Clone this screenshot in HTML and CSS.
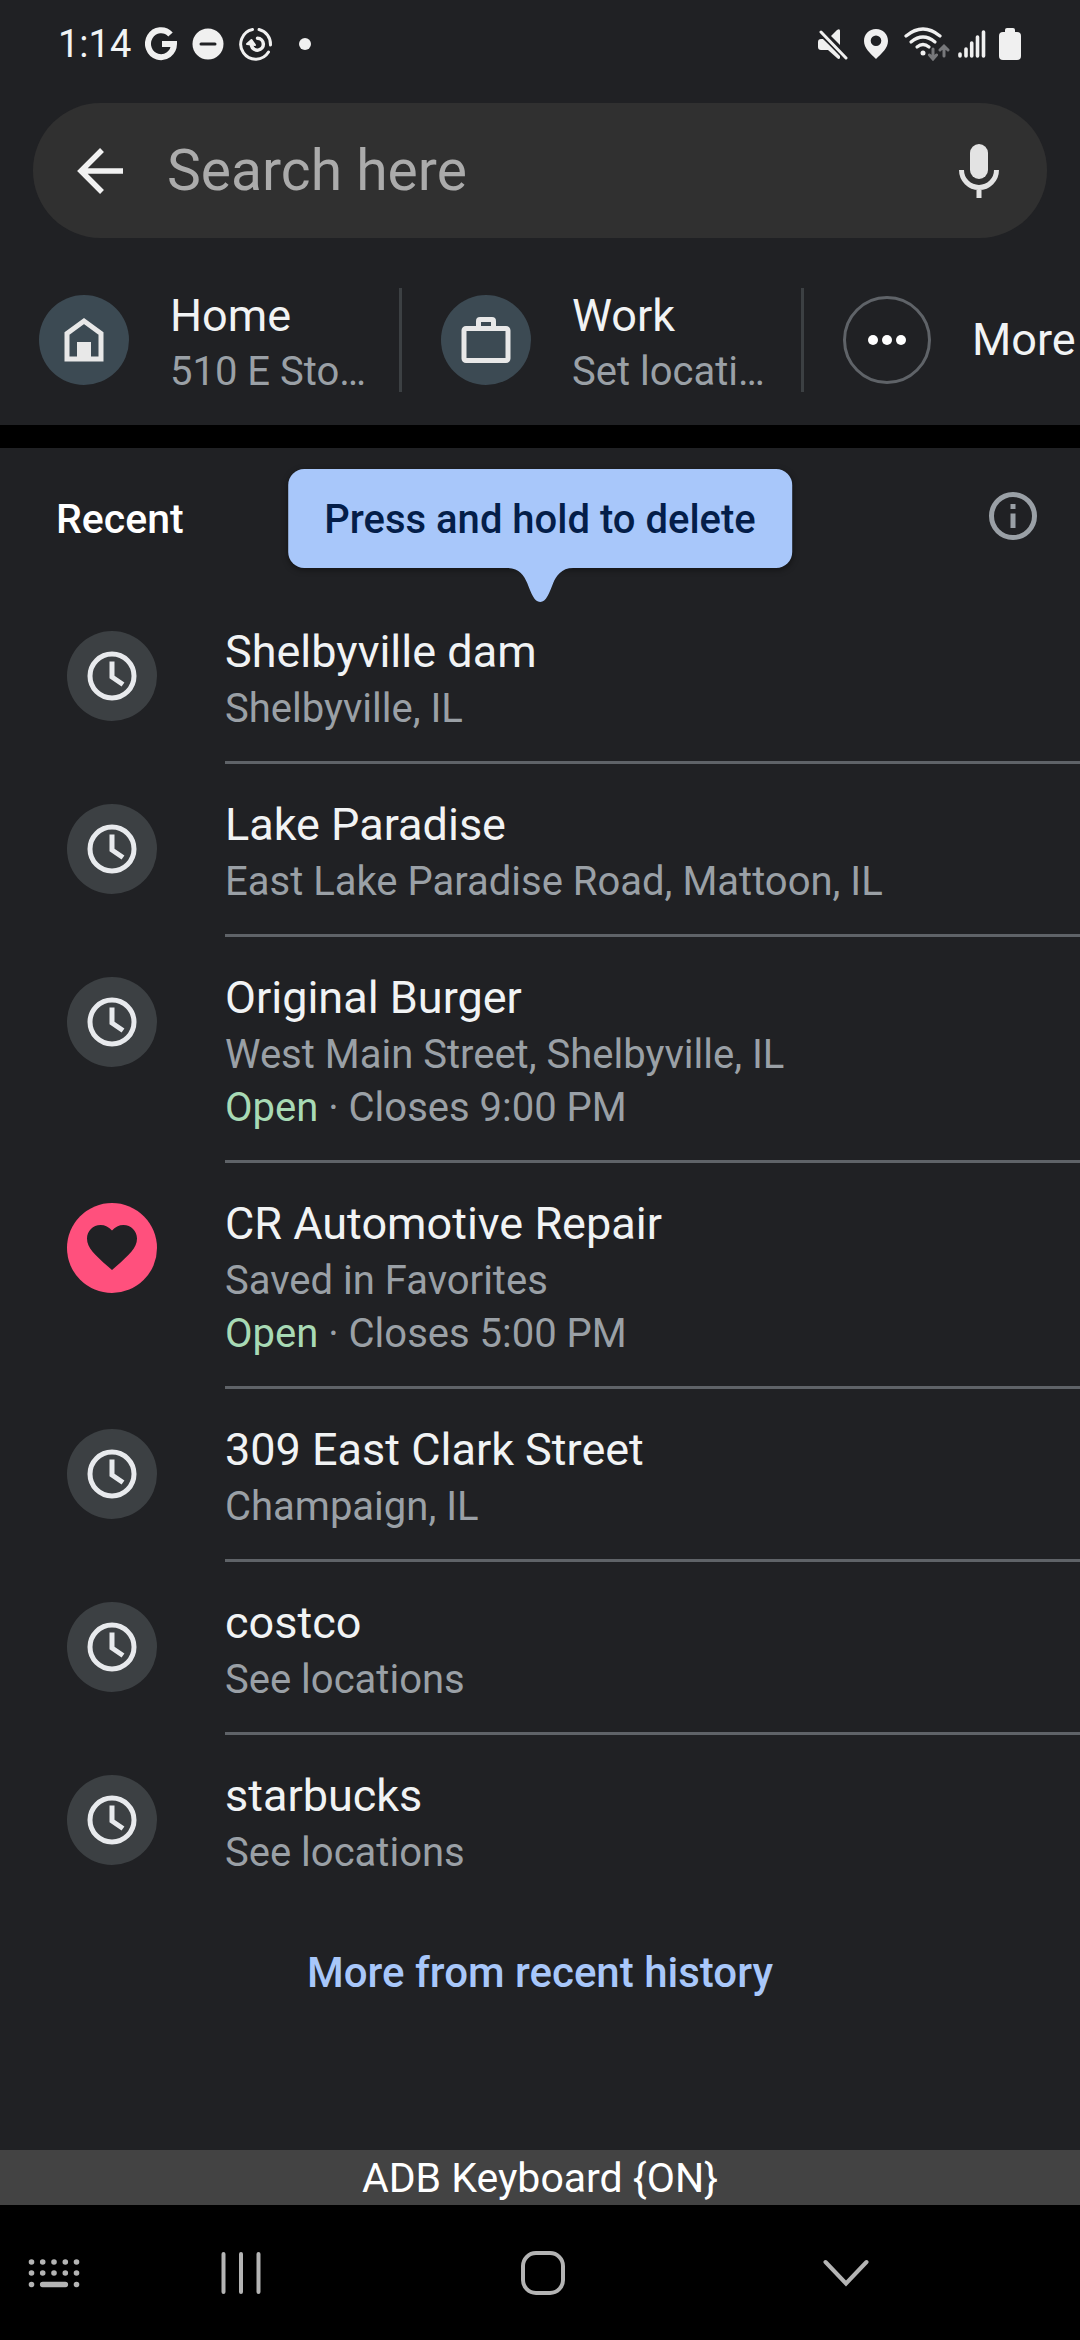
FILE: index.html
```html
<!DOCTYPE html>
<html lang="en">
<head>
<meta charset="utf-8">
<meta name="viewport" content="width=device-width, initial-scale=1">
<title>Search</title>
<link rel="stylesheet" href="styles.css">
</head>
<body>
<svg width="0" height="0" class="sprite" aria-hidden="true">
  <symbol id="clock" viewBox="0 0 50 50">
    <circle cx="25" cy="25" r="22" fill="none" stroke="#e8eaed" stroke-width="5"/>
    <path d="M25 10.500V26L36 33.500" fill="none" stroke="#e8eaed" stroke-width="5"/>
  </symbol>
</svg>
<div class="screen">
  <header class="status">
    <span class="time">1:14</span>
    <svg class="s-google" width="32" height="34" viewBox="0 0 32 34"><path d="M25.500 7.500A13 13.500 0 1 0 29 17H17" fill="none" stroke="#f0f0f0" stroke-width="6"/></svg>
    <svg class="s-dnd" width="32" height="32" viewBox="0 0 32 32"><circle cx="16" cy="16" r="15.500" fill="#f0f0f0"/><path d="M9 16H23" stroke="#202124" stroke-width="3" stroke-linecap="round"/></svg>
    <svg class="s-well" width="34" height="34" viewBox="0 0 34 34" fill="none" stroke="#f0f0f0" stroke-width="3" stroke-linecap="round"><path d="M13.500 2.500A15 15 0 1 0 29.500 25"/><path d="M20 2.500A15 15 0 0 1 31.500 18"/><path d="M18.500 11.200A6 6 0 1 1 12.500 18.500" stroke-width="3.500"/><path d="M8 17L12.500 13L16 18Z" fill="#f0f0f0" stroke-width="2" stroke-linejoin="round"/></svg>
    <span class="s-dot"></span>
    <span class="spacer"></span>
    <svg class="s-mute" width="30" height="32" viewBox="0 0 30 32" fill="#f0f0f0"><path d="M3 11H5L22 27V30Q21 32 19 30L10 22H3Q0 22 0 19V14Q0 11 3 11Z"/><path d="M13 8L19 2Q22 0 22 3V17Z"/><path d="M3 4L28 30" stroke="#202124" stroke-width="6"/><path d="M3 4L28 30" stroke="#f0f0f0" stroke-width="3" stroke-linecap="round"/></svg>
    <svg class="s-pin" width="24" height="30" viewBox="0 0 24 30"><path fill="#f0f0f0" fill-rule="evenodd" d="M12 0C5 0 0 5 0 12C0 19 6 24 12 30C18 24 24 19 24 12C24 5 19 0 12 0ZM12 6.500A5.300 5.300 0 1 1 12 17.100A5.300 5.300 0 0 1 12 6.500Z"/></svg>
    <svg class="s-wifi" width="46" height="34" viewBox="0 0 46 34" fill="none" stroke-linecap="round"><g stroke="#f0f0f0" stroke-width="3.200"><path d="M2 9Q19 -5 36 9"/><path d="M7 15Q19 5 31 15"/><path d="M13 20Q19 15 25 20"/></g><circle cx="19" cy="26" r="2.500" fill="#f0f0f0"/><path d="M29 22V31M25.500 28L29 32L32.500 28M40 29V20M36 23L40 19L44 23" stroke="#77787b" stroke-width="3"/></svg>
    <svg class="s-signal" width="28" height="32" viewBox="0 0 28 32" stroke="#f0f0f0" stroke-width="3.600" stroke-linecap="round"><path d="M2 26V28M8 21V28M13.700 15V28M19.500 9V28M25.500 4V28"/></svg>
    <svg class="s-battery" width="22" height="32" viewBox="0 0 22 32" fill="#f0f0f0"><rect x="6" y="0" width="10" height="8" rx="2"/><rect x="0" y="4" width="22" height="28" rx="4"/></svg>
  </header>

  <form class="search">
    <button type="button" class="plain" aria-label="Back"><svg width="46" height="46" viewBox="0 0 46 46" fill="none" stroke="#f1f1f1" stroke-width="5.500"><path d="M25 2L4 23L25 44M4 23H46"/></svg></button>
    <input type="text" placeholder="Search here" aria-label="Search here">
    <button type="button" class="plain" aria-label="Voice search"><svg width="40" height="56" viewBox="0 0 40 56"><rect x="11" y="1" width="18" height="35" rx="9" fill="#e3e3e3"/><path d="M2.500 27A17.500 17.500 0 0 0 37.500 27M20 44V55" fill="none" stroke="#e3e3e3" stroke-width="5"/></svg></button>
  </form>

  <nav class="shortcuts">
    <a href="#" class="shortcut">
      <span class="disc blue"><svg width="40" height="46" viewBox="0 0 40 46"><path d="M3 16.500L20 4L37 16.500V42H3Z" fill="none" stroke="#e8e8e8" stroke-width="5"/><rect x="13" y="25" width="14" height="18" fill="#e8e8e8"/></svg></span>
      <span class="label"><span class="title">Home</span><span class="sub">510 E Sto…</span></span>
    </a>
    <a href="#" class="shortcut">
      <span class="disc blue"><svg width="50" height="48" viewBox="0 0 50 48" fill="none" stroke="#e8e8e8" stroke-width="5"><rect x="3" y="12.500" width="44" height="32" rx="2"/><path d="M17.500 12V5Q17.500 3.500 19 3.500H31Q32.500 3.500 32.500 5V12"/></svg></span>
      <span class="label"><span class="title">Work</span><span class="sub">Set locati…</span></span>
    </a>
    <a href="#" class="shortcut more">
      <span class="disc ring"><svg width="40" height="12" viewBox="0 0 40 12" fill="#fff"><circle cx="6" cy="6" r="5"/><circle cx="20" cy="6" r="5"/><circle cx="34" cy="6" r="5"/></svg></span>
      <span class="title">More</span>
    </a>
  </nav>

  <main class="recent">
    <div class="heading">
      <h2>Recent</h2>
      <button type="button" class="plain" aria-label="About recent history"><svg width="50" height="50" viewBox="0 0 50 50"><circle cx="25" cy="25" r="21.500" fill="none" stroke="#9aa0a6" stroke-width="5"/><path d="M25 13V18M25 22.500V37" stroke="#9aa0a6" stroke-width="5"/></svg></button>
      <div class="tooltip" role="tooltip">Press and hold to delete<svg width="66" height="36" viewBox="0 0 66 36"><path fill="#a8c7fa" d="M0 0V1C12 1 17 9 20 16C24 26 27 35 33 35C39 35 42 26 46 16C49 9 54 1 66 1V0Z"/></svg></div>
    </div>
    <ul>
      <li><span class="disc"><svg width="50" height="50"><use href="#clock"/></svg></span><a href="#" class="place"><span class="title">Shelbyville dam</span><span class="sub">Shelbyville, IL</span></a></li>
      <li><span class="disc"><svg width="50" height="50"><use href="#clock"/></svg></span><a href="#" class="place"><span class="title">Lake Paradise</span><span class="sub">East Lake Paradise Road, Mattoon, IL</span></a></li>
      <li><span class="disc"><svg width="50" height="50"><use href="#clock"/></svg></span><a href="#" class="place"><span class="title">Original Burger</span><span class="sub">West Main Street, Shelbyville, IL</span><span class="sub"><span class="open">Open</span> · Closes 9:00 PM</span></a></li>
      <li><span class="disc pink"><svg width="50" height="46" viewBox="0 0 50 46"><path fill="#202124" d="M25 45L21 41.500C8 30 0 23 0 13.500C0 6 6 0 13.500 0C18 0 22 2 25 5.500C28 2 32 0 36.500 0C44 0 50 6 50 13.500C50 23 42 30 29 41.500Z"/></svg></span><a href="#" class="place"><span class="title">CR Automotive Repair</span><span class="sub">Saved in Favorites</span><span class="sub"><span class="open">Open</span> · Closes 5:00 PM</span></a></li>
      <li><span class="disc"><svg width="50" height="50"><use href="#clock"/></svg></span><a href="#" class="place"><span class="title">309 East Clark Street</span><span class="sub">Champaign, IL</span></a></li>
      <li><span class="disc"><svg width="50" height="50"><use href="#clock"/></svg></span><a href="#" class="place"><span class="title">costco</span><span class="sub">See locations</span></a></li>
      <li><span class="disc"><svg width="50" height="50"><use href="#clock"/></svg></span><a href="#" class="place"><span class="title">starbucks</span><span class="sub">See locations</span></a></li>
    </ul>
    <a href="#" class="history">More from recent history</a>
  </main>

  <footer>
    <div class="keyboard">ADB Keyboard {ON}</div>
    <div class="navbar">
      <button type="button" class="plain" aria-label="Keyboard"><svg width="52" height="30" viewBox="0 0 52 30" fill="none" stroke="#b4b4b4" stroke-width="5.600" stroke-linecap="round"><path d="M3.500 4h.01M14.700 4h.01M26 4h.01M37.300 4h.01M48.500 4h.01M3.500 15h.01M14.700 15h.01M26 15h.01M37.300 15h.01M48.500 15h.01M3.500 26.500h.01M14.700 26.500H37.300M48.500 26.500h.01"/></svg></button>
      <button type="button" class="plain" aria-label="Recent apps"><svg width="40" height="44" viewBox="0 0 40 44" stroke="#b4b4b4" stroke-width="4" stroke-linecap="round"><path d="M2.500 3V41M20 3V41M37.500 3V41"/></svg></button>
      <button type="button" class="plain" aria-label="Home"><svg width="46" height="46" viewBox="0 0 46 46"><rect x="3" y="3" width="40" height="40" rx="13" fill="none" stroke="#b4b4b4" stroke-width="4"/></svg></button>
      <button type="button" class="plain" aria-label="Hide keyboard"><svg width="46" height="28" viewBox="0 0 46 28" fill="none" stroke="#b4b4b4" stroke-width="4" stroke-linecap="round"><path d="M2.500 3L23 24.500L43.500 3"/></svg></button>
    </div>
  </footer>
</div>
</body>
</html>
```
FILE: styles.css
```css
* { box-sizing: border-box; }

body {
  margin: 0;
  background: #202124;
  color: #f1f3f4;
  font-family: Roboto, sans-serif;
  font-size: 40px;
}

a { color: inherit; text-decoration: none; }
svg { display: block; flex: none; }
.sprite { position: absolute; }

.plain {
  padding: 0;
  border: 0;
  background: none;
  flex: none;
}

.screen {
  min-height: 100vh;
  display: flex;
  flex-direction: column;
  overflow: hidden;
}

/* Status bar */
.status {
  display: flex;
  align-items: center;
  height: 88px;
  padding: 0 59px 0 58px;
}
.time {
  font-size: 38px;
  line-height: 48px;
}
.s-google { margin-left: 14px; }
.s-dnd, .s-well { margin-left: 15px; }
.s-dot {
  width: 12px;
  height: 12px;
  margin-left: 26px;
  border-radius: 50%;
  background: #f0f0f0;
}
.spacer { flex: 1; }
.s-pin, .s-wifi { margin-left: 16px; }
.s-signal { margin-left: 8px; }
.s-battery { margin-left: 13px; }

/* Search box */
.search {
  display: flex;
  align-items: center;
  height: 135px;
  margin: 15px 33px 0;
  padding: 0 48px 0 44px;
  border-radius: 68px;
  background: #303030;
}
.search input {
  flex: 1;
  min-width: 0;
  margin-left: 44px;
  padding: 0;
  border: 0;
  outline: 0;
  background: none;
  color: #f1f1f1;
  font-family: Roboto, sans-serif;
  font-size: 57px;
}
.search input::placeholder { color: #ababab; opacity: 1; }

/* Shortcuts */
.shortcuts {
  display: flex;
  padding: 50px 0 33px 39px;
  border-bottom: 23px solid #000;
  overflow: hidden;
  box-sizing: content-box;
  height: 104px;
}
.shortcut {
  display: flex;
  flex: none;
  align-items: center;
  gap: 41px;
  width: 363px;
  margin-right: 39px;
  border-right: 3px solid #3c4043;
}
.shortcut.more {
  width: auto;
  margin: 0;
  border: 0;
}
.label { width: 200px; margin-top: 4px; }
.title {
  display: block;
  font-size: 45px;
  line-height: 60px;
}
.label .title { line-height: 58px; }
.sub {
  display: block;
  overflow: hidden;
  color: #9aa0a6;
  font-size: 40px;
  line-height: 53px;
  text-overflow: ellipsis;
  white-space: nowrap;
}
.disc {
  display: flex;
  flex: none;
  align-items: center;
  justify-content: center;
  width: 90px;
  height: 90px;
  border-radius: 50%;
  background: #3c4043;
}
.disc.blue { background: #3c4a53; }
.disc.pink { background: #ff507d; }
.disc.ring {
  width: 88px;
  height: 88px;
  border: 3px solid #5f6368;
  background: none;
}

/* Recent places */
.recent {
  display: flex;
  flex: 1;
  flex-direction: column;
}
.heading {
  position: relative;
  display: flex;
  align-items: center;
  justify-content: space-between;
  height: 143px;
  padding: 0 42px 8px 56px;
}
h2 {
  margin: 0;
  padding-top: 6px;
  color: #fff;
  font-size: 41px;
  font-weight: 500;
}
.tooltip {
  position: absolute;
  top: 21px;
  left: 50%;
  z-index: 1;
  padding: 2px 36px 0;
  border-radius: 16px;
  background: #a8c7fa;
  box-shadow: 0 2px 6px #00000066;
  color: #041e49;
  font-size: 40px;
  font-weight: 500;
  line-height: 97px;
  white-space: nowrap;
  transform: translateX(-50%);
}
.tooltip svg {
  position: absolute;
  top: 98px;
  left: 50%;
  margin-left: -33px;
}
ul {
  margin: 0;
  padding: 0;
  list-style: none;
}
li {
  display: flex;
  gap: 68px;
  padding-left: 67px;
}
li .disc { margin-top: 40px; }
.place {
  flex: 1;
  min-width: 0;
  padding: 31px 0 26px;
  border-bottom: 3px solid #5f6368;
}
li:last-child .place { border-color: transparent; }
.open { color: #a8dab5; }
.history {
  align-self: center;
  margin-top: 38px;
  color: #a8c7fa;
  font-size: 42px;
  font-weight: 500;
  line-height: 53px;
}

/* Keyboard strip and system navigation */
.keyboard {
  padding-top: 2px;
  background: #434343;
  color: #fff;
  font-size: 41px;
  line-height: 53px;
  text-align: center;
}
.navbar {
  display: grid;
  grid-template-columns: 107fr 268fr 336fr 270fr 99fr;
  align-items: center;
  height: 135px;
  background: #000;
}
.navbar button { justify-self: center; }
```
